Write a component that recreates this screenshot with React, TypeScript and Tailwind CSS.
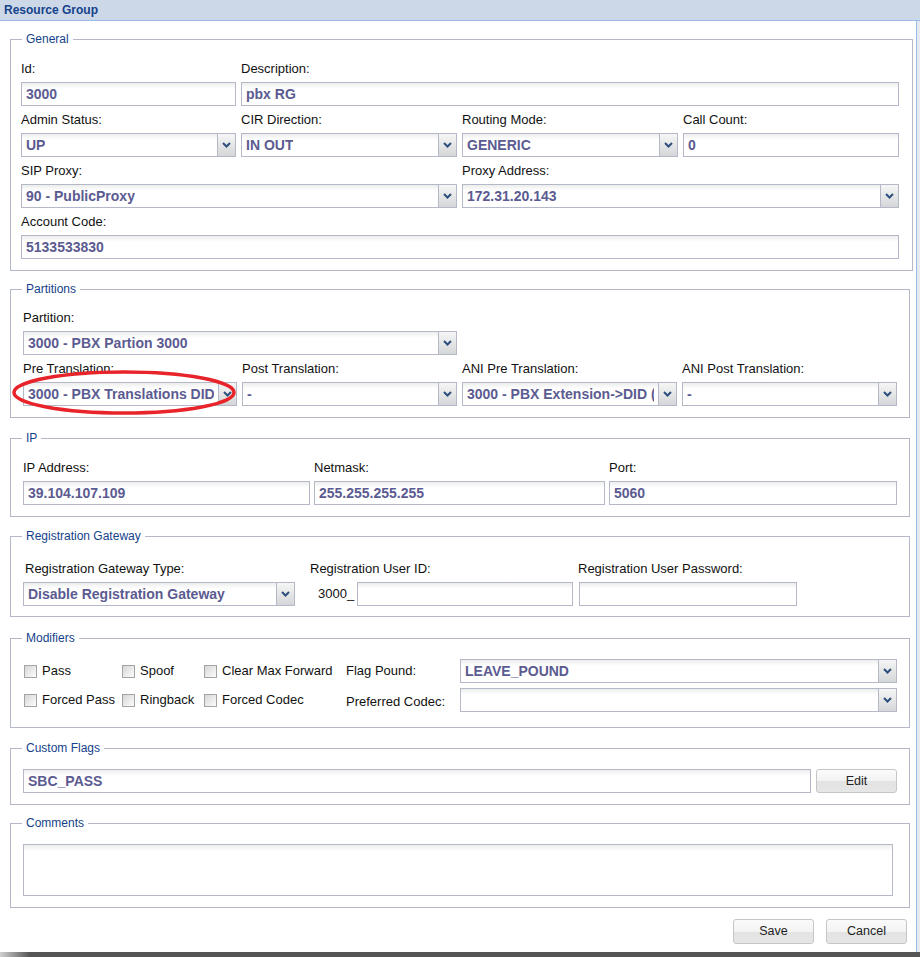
import React from "react";

const VAL = "text-[14px] font-bold text-[#5b5b91]";

function Chevron() {
  return (
    <svg width="9" height="6" viewBox="0 0 9 6">
      <path d="M1 1 L4.5 4.5 L8 1" fill="none" stroke="#2e4f7e" strokeWidth="2" />
    </svg>
  );
}

function Input({ value, className = "" }: { value?: string; className?: string }) {
  return (
    <div
      className={`h-[24px] border border-[#b5b8c8] bg-[linear-gradient(#eceeec,#fff_6px)] flex items-center px-[4px] overflow-hidden whitespace-nowrap ${VAL} ${className}`}
    >
      {value}
    </div>
  );
}

function Select({ value, className = "" }: { value?: string; className?: string }) {
  return (
    <div className={`h-[24px] border border-[#b5b8c8] flex bg-[linear-gradient(#eceeec,#fff_6px)] ${className}`}>
      <div className={`flex-1 min-w-0 px-[4px] flex items-center overflow-hidden whitespace-nowrap ${VAL}`}>
        <span className="block overflow-hidden">{value}</span>
      </div>
      <div className="w-[18px] shrink-0 border-l border-[#b5b8c8] bg-[linear-gradient(#f6f6f6,#d4d6d8)] flex items-center justify-center">
        <Chevron />
      </div>
    </div>
  );
}

function Label({ children }: { children: React.ReactNode }) {
  return <div className="h-[14px] leading-[14px] text-[13px] text-[#111] mb-[6px] whitespace-nowrap">{children}</div>;
}

function Field({ label, children, className = "" }: { label: string; children: React.ReactNode; className?: string }) {
  return (
    <div className={`flex flex-col ${className}`}>
      <Label>{label}</Label>
      {children}
    </div>
  );
}

function FS({ legend, className = "", inner = "", children }: { legend: string; className?: string; inner?: string; children: React.ReactNode }) {
  return (
    <fieldset className={`border border-[#b5b8c8] ${className}`}>
      <legend className="ml-[11px] px-[4px] text-[12px] leading-[14px] text-[#15428b]">{legend}</legend>
      <div className={inner}>{children}</div>
    </fieldset>
  );
}

function Check({ label }: { label: string }) {
  return (
    <div className="flex items-center gap-[5px] text-[13px] text-[#111] whitespace-nowrap">
      <div className="w-[13px] h-[13px] border border-[#a4a4a4] bg-[linear-gradient(135deg,#d6d6d6,#fdfdfd)]" />
      <span>{label}</span>
    </div>
  );
}

function Btn({ label, className = "" }: { label: string; className?: string }) {
  return (
    <div
      className={`border border-[#c6c6c6] rounded-[3px] bg-[linear-gradient(#fbfbfb_0%,#f3f3f3_50%,#e3e3e3_51%,#e6e6e6_100%)] flex items-center justify-center text-[12.5px] text-[#222] ${className}`}
    >
      {label}
    </div>
  );
}

export default function App() {
  return (
    <div className="w-[920px] h-[957px] flex flex-col bg-[#e6eaf0] font-['Liberation_Sans',Arial,sans-serif]">
      <div className="h-[21px] shrink-0 bg-[#ccd8e7] border-b border-[#99bbe8] flex items-center pl-[4px] text-[12px] font-bold text-[#15428b]">
        Resource Group
      </div>
      <div className="flex flex-1 min-h-0">
        <div className="w-[917px] bg-white border-r border-[#99bbe8] flex flex-col pl-[10px]">
          {/* General */}
          <FS legend="General" className="mt-[11px] w-[903px] pt-[16px] pb-[11px]" inner="pl-[10px]">
            <div className="grid grid-cols-[215px_216px_216px_216px] gap-x-[5px] gap-y-[7px]">
              <Field label="Id:">
                <Input value="3000" />
              </Field>
              <Field label="Description:" className="col-span-3">
                <Input value="pbx RG" />
              </Field>
              <Field label="Admin Status:">
                <Select value="UP" />
              </Field>
              <Field label="CIR Direction:">
                <Select value="IN OUT" />
              </Field>
              <Field label="Routing Mode:">
                <Select value="GENERIC" />
              </Field>
              <Field label="Call Count:">
                <Input value="0" />
              </Field>
              <Field label="SIP Proxy:" className="col-span-2">
                <Select value="90 - PublicProxy" />
              </Field>
              <Field label="Proxy Address:" className="col-span-2">
                <Select value="172.31.20.143" />
              </Field>
              <Field label="Account Code:" className="col-span-4">
                <Input value="5133533830" />
              </Field>
            </div>
          </FS>

          {/* Partitions */}
          <FS legend="Partitions" className="mt-[11px] w-[900px] pt-[15px] pb-[11px]" inner="pl-[12px]">
            <div className="grid grid-cols-[214px_215px_215px_215px] gap-x-[5px] gap-y-[7px]">
              <Field label="Partition:" className="col-span-2">
                <Select value="3000 - PBX Partion 3000" />
              </Field>
              <div className="col-span-2" />
              <Field label="Pre Translation:">
                <div className="relative">
                  <Select value="3000 - PBX Translations DID" />
                  <svg className="absolute left-[-12px] top-[-12px] pointer-events-none" width="230" height="47" viewBox="0 0 230 47">
                    <ellipse cx="113" cy="22.5" rx="110" ry="20.5" fill="none" stroke="#e8232a" strokeWidth="3.5" />
                  </svg>
                </div>
              </Field>
              <Field label="Post Translation:">
                <Select value="-" />
              </Field>
              <Field label="ANI Pre Translation:">
                <Select value="3000 - PBX Extension->DID (" />
              </Field>
              <Field label="ANI Post Translation:">
                <Select value="-" />
              </Field>
            </div>
          </FS>

          {/* IP */}
          <FS legend="IP" className="mt-[13px] w-[900px] pt-[16px] pb-[11px]" inner="pl-[12px]">
            <div className="grid grid-cols-[287px_291px_288px] gap-x-[4px]">
              <Field label="IP Address:">
                <Input value="39.104.107.109" />
              </Field>
              <Field label="Netmask:">
                <Input value="255.255.255.255" />
              </Field>
              <Field label="Port:">
                <Input value="5060" />
              </Field>
            </div>
          </FS>

          {/* Registration Gateway */}
          <FS legend="Registration Gateway" className="mt-[12px] w-[900px] pt-[19px] pb-[10px]" inner="pl-[12px]">
            <div className="flex">
              <Field label="Registration Gateway Type:" className="w-[272px] pl-[2px]">
                <Select value="Disable Registration Gateway" className="-ml-[2px]" />
              </Field>
              <Field label="Registration User ID:" className="ml-[15px]">
                <div className="flex items-center">
                  <span className="pl-[8px] w-[47px] text-[13px] text-[#111]">3000_</span>
                  <Input className="w-[216px]" />
                </div>
              </Field>
              <Field label="Registration User Password:" className="ml-[5px]">
                <Input className="ml-[1px] w-[218px]" />
              </Field>
            </div>
          </FS>

          {/* Modifiers */}
          <FS legend="Modifiers" className="mt-[14px] w-[900px] pt-[14px] pb-[15px]" inner="pl-[13px]">
            <div className="grid grid-cols-[98px_82px_142px_114px_437px] grid-rows-[24px_24px] gap-y-[5px] items-center">
              <Check label="Pass" />
              <Check label="Spoof" />
              <Check label="Clear Max Forward" />
              <span className="text-[13px] text-[#111]">Flag Pound:</span>
              <Select value="LEAVE_POUND" />
              <Check label="Forced Pass" />
              <Check label="Ringback" />
              <Check label="Forced Codec" />
              <span className="text-[13px] text-[#111] pt-[4px]">Preferred Codec:</span>
              <Select />
            </div>
          </FS>

          {/* Custom Flags */}
          <FS legend="Custom Flags" className="mt-[13px] w-[900px] pt-[14px] pb-[11px]" inner="pl-[12px]">
            <div className="flex gap-[5px]">
              <Input value="SBC_PASS" className="w-[788px]" />
              <Btn label="Edit" className="w-[81px] h-[24px]" />
            </div>
          </FS>

          {/* Comments */}
          <FS legend="Comments" className="mt-[11px] w-[900px] pt-[14px] pb-[11px]" inner="pl-[12px]">
            <div className="w-[870px] h-[52px] border border-[#b5b8c8] bg-[linear-gradient(#eceeec,#fff_6px)]" />
          </FS>

          <div className="flex justify-end gap-[12px] mt-[11px] pr-[9px]">
            <Btn label="Save" className="w-[81px] h-[25px]" />
            <Btn label="Cancel" className="w-[81px] h-[25px]" />
          </div>
        </div>
        <div className="flex-1 bg-[#e6eaf0]" />
      </div>
      <div className="h-[5px] shrink-0 bg-[linear-gradient(90deg,#d0d0d0,#555_30px,#555)]" />
    </div>
  );
}
